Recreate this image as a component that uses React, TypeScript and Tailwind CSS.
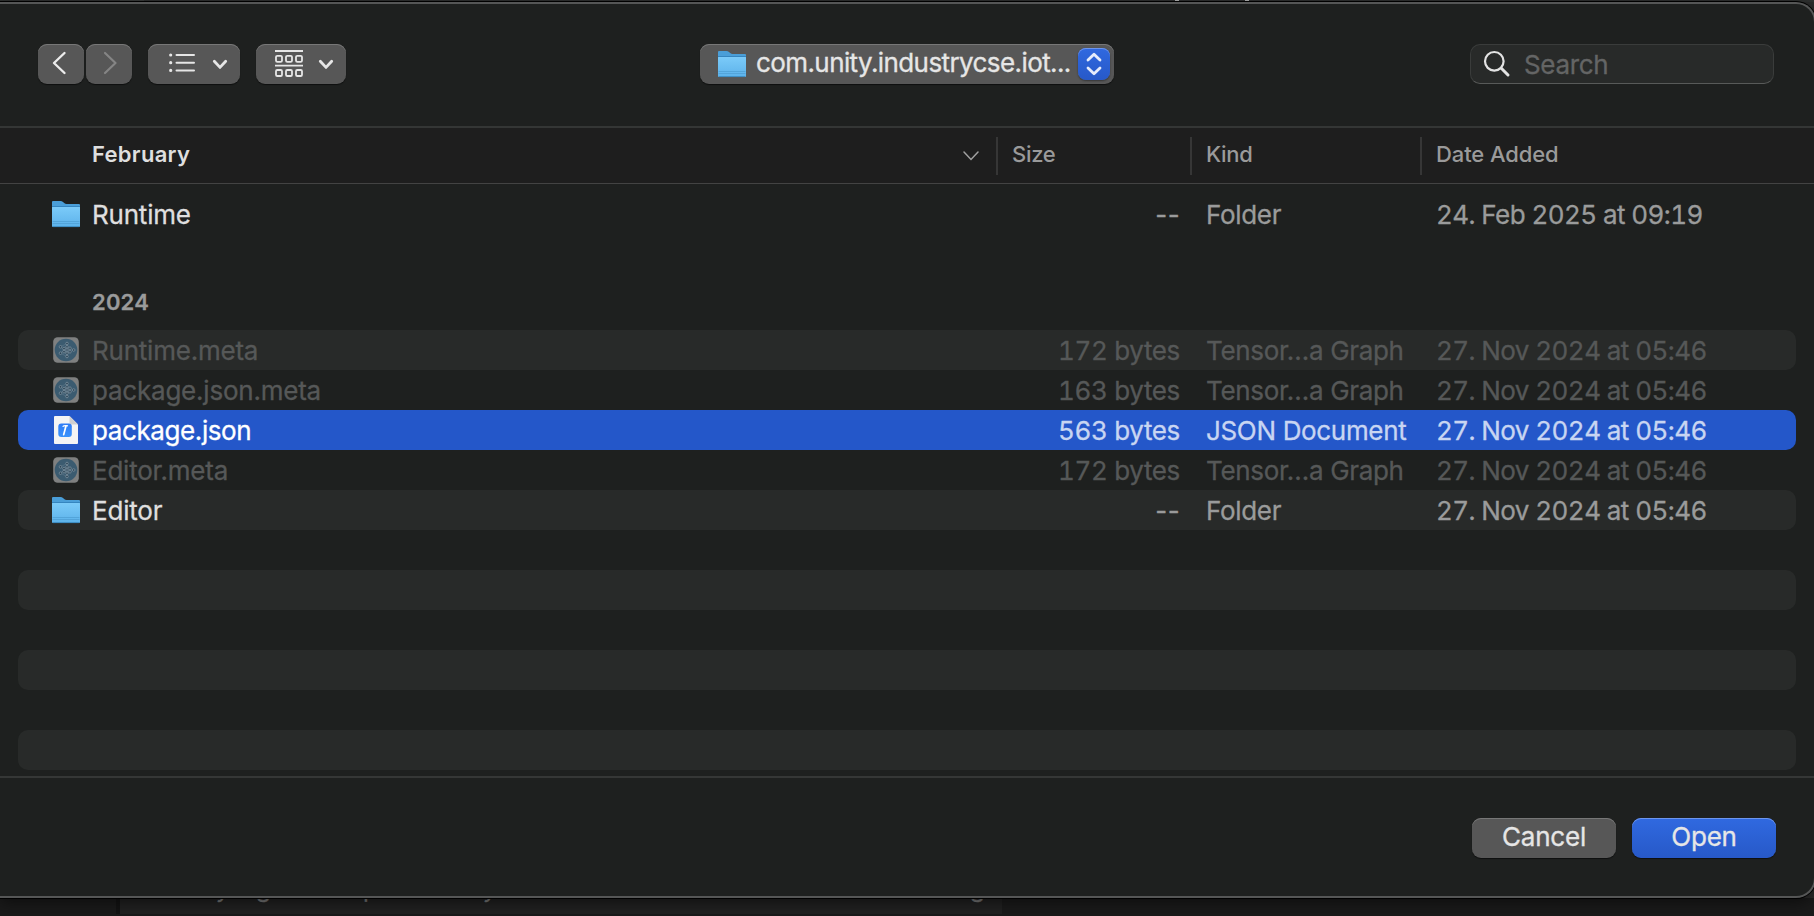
import React from "react";

function FolderIcon() {
  return (
    <svg width="30" height="28" viewBox="0 0 30 28">
      <defs>
        <linearGradient id="folderFront" x1="0" y1="0" x2="0" y2="1">
          <stop offset="0" stopColor="#7ccbf9" />
          <stop offset="1" stopColor="#5cb2ea" />
        </linearGradient>
      </defs>
      <path d="M1 2Q1 1 2 1H9.5Q11 1 12 2L13.5 3.2Q14.2 4 15.5 4H28Q29 4 29 5V10H1Z" fill="#4a9ed8" />
      <path d="M1 7.5Q1 6.6 2 6.6H28Q29 6.6 29 7.5V26Q29 27 28 27H2Q1 27 1 26Z" fill="url(#folderFront)" />
      <path d="M1 6.5H29" stroke="#3585bf" strokeWidth="1" />
      <path d="M1.5 21.5H28.5M1.5 23.5H28.5" stroke="#4f9fd4" strokeWidth=".8" />
      <path d="M2 26.6H28" stroke="#3d8cc2" strokeWidth="1" />
    </svg>
  );
}

const nodes = [
  [16, 8.5], [9.5, 11.8], [13, 13.5], [9.5, 18.2], [13, 16.7], [16, 11.8], [16, 15], [16, 18.2], [19, 13.2], [19, 16.8], [16, 21.5], [22.7, 15],
];

function GraphIcon() {
  return (
    <svg width="30" height="30" viewBox="0 0 30 30">
      <rect x="2.2" y="2.2" width="25.6" height="25.6" rx="4.5" fill="#7f8080" />
      <circle cx="15" cy="15" r="11.3" fill="#3b5b70" />
      <path d="M9.5 11.8L16 8.5M9.5 18.2L16 21.5M9.5 11.8L16 18.2M9.5 18.2L16 11.8M16 8.5V21.5M16 11.8L22.7 15L16 18.2" stroke="#61798a" strokeWidth=".6" fill="none" />
      {nodes.map(([x, y]) => (
        <circle key={`${x}-${y}`} cx={x} cy={y} r="1.3" fill="#2c4354" stroke="#7b8f9d" strokeWidth=".8" />
      ))}
    </svg>
  );
}

function JsonIcon() {
  return (
    <svg width="30" height="32" viewBox="0 0 30 32">
      <defs>
        <linearGradient id="jsonBadge" x1="0" y1="0" x2="0" y2="1">
          <stop offset="0" stopColor="#2f7cf6" />
          <stop offset="1" stopColor="#3a93fb" />
        </linearGradient>
      </defs>
      <path d="M3 3Q3 2 4 2H18.5L27 10.5V29Q27 30 26 30H4Q3 30 3 29Z" fill="#f4f4f4" />
      <path d="M18.5 2L27 10.5H20Q18.5 10.5 18.5 9Z" fill="#cfcfd1" />
      <rect x="7.3" y="9.5" width="13.5" height="13.5" rx="3" fill="url(#jsonBadge)" />
      <path d="M15 11.8L12.7 20.6" stroke="#fff" strokeWidth="1.7" strokeLinecap="round" />
      <path d="M11.6 12.6Q13.2 11 17 11.9" stroke="#fff" strokeWidth="1.3" fill="none" />
    </svg>
  );
}

function SmallChevron() {
  return (
    <svg width="16" height="12" viewBox="0 0 16 12" fill="none" stroke="#e6e6e6" strokeWidth="2.8" strokeLinecap="round" strokeLinejoin="round">
      <path d="M2.3 3.2L8 9.4L13.7 3.2" />
    </svg>
  );
}

type Kind = "folder" | "graph" | "json";
type Row = { name: string; size: string; kind: string; date: string; icon: Kind };

const rows: Row[] = [
  { name: "Runtime.meta", size: "172 bytes", kind: "Tensor…a Graph", date: "27. Nov 2024 at 05:46", icon: "graph" },
  { name: "package.json.meta", size: "163 bytes", kind: "Tensor…a Graph", date: "27. Nov 2024 at 05:46", icon: "graph" },
  { name: "package.json", size: "563 bytes", kind: "JSON Document", date: "27. Nov 2024 at 05:46", icon: "json" },
  { name: "Editor.meta", size: "172 bytes", kind: "Tensor…a Graph", date: "27. Nov 2024 at 05:46", icon: "graph" },
  { name: "Editor", size: "--", kind: "Folder", date: "27. Nov 2024 at 05:46", icon: "folder" },
];

function FileRow({ row, striped }: { row: Row; striped: boolean }) {
  const tone =
    row.icon === "json" ? "bg-[#2457c9] text-[#c8d5f2]" : row.icon === "graph" ? "text-[#565858]" : "text-[#9a9b9b]";
  const nameTone =
    row.icon === "json"
      ? "tracking-[-0.4px] text-white"
      : row.icon === "graph"
        ? "tracking-[-0.22px]"
        : "tracking-[-0.2px] text-[#dfdfdf]";
  const sizeStyle = row.size === "--" ? "tracking-[0.4px]" : "tracking-[-0.35px] tabular-nums";
  return (
    <div className={`mx-[18px] flex h-10 items-center rounded-[10px] text-[26px] whitespace-nowrap ${striped ? "bg-[#282a29]" : ""} ${tone}`}>
      <div className="flex w-[74px] shrink-0 justify-end pr-[11px]">
        {row.icon === "folder" ? <FolderIcon /> : row.icon === "graph" ? <GraphIcon /> : <JsonIcon />}
      </div>
      <div className={`w-[926px] shrink-0 ${nameTone}`}>{row.name}</div>
      <div className={`w-[162px] shrink-0 text-right ${sizeStyle}`}>{row.size}</div>
      <div className="ml-[26px] w-[230px] shrink-0 tracking-[-0.33px]">{row.kind}</div>
      <div className="tracking-[-0.58px] tabular-nums">{row.date}</div>
    </div>
  );
}

const button = "flex h-10 items-center rounded-[9px] bg-[#575757] shadow-[inset_0_1px_0_#777,0_1px_1px_#0008]";

export default function App() {
  return (
    <div className="flex h-[916px] w-[1814px] flex-col overflow-hidden bg-[#2b2b2b] font-[Inter,sans-serif] tracking-[-0.4px] [-webkit-text-stroke:0.3px]">
      <div className="flex h-[2px] shrink-0 bg-[#2f3130]">
        <div className="ml-[120px] h-[2px] w-6 bg-[#3a3c3b]" />
        <div className="ml-[1031px] h-px w-1 bg-[#b5b5b5]" />
        <div className="ml-[66px] h-px w-1 bg-[#b5b5b5]" />
      </div>
      <main className="z-10 flex h-[896px] w-[1816px] shrink-0 flex-col rounded-r-[20px] border-y-2 border-r-2 border-[#555656] bg-[#1e201f] shadow-[0_0_0_1px_#000,0_4px_16px_#0008]">
        <header className="flex h-[122px] shrink-0 items-start pt-10 pl-[38px]">
          <button className={`${button} w-[46px] justify-center`}>
            <svg width="20" height="28" viewBox="0 0 20 28" fill="none" stroke="#ececec" strokeWidth="2.4" strokeLinecap="round" strokeLinejoin="round">
              <path d="M13.5 3L3 13L13.5 23" />
            </svg>
          </button>
          <button className={`${button} ml-[2px] w-[46px] justify-center`}>
            <svg width="20" height="28" viewBox="0 0 20 28" fill="none" stroke="#858585" strokeWidth="2.2" strokeLinecap="round" strokeLinejoin="round">
              <path d="M6 3L16.5 13L6 23" />
            </svg>
          </button>
          <button className={`${button} ml-4 w-[92px] pl-5`}>
            <svg width="28" height="24" viewBox="0 0 28 24" stroke="#e6e6e6" strokeWidth="2" strokeLinecap="round">
              <path d="M8.5 3H26M8.5 10.7H26M8.5 18.4H26" />
              <path d="M2.7 3h.01M2.7 10.7h.01M2.7 18.4h.01" strokeWidth="3.2" />
            </svg>
            <span className="ml-4"><SmallChevron /></span>
          </button>
          <button className={`${button} ml-4 w-[90px] pl-[18px]`}>
            <svg width="30" height="30" viewBox="0 0 30 30" fill="none" stroke="#e6e6e6" strokeWidth="1.8">
              <path d="M1 2H29M1 16.7H29" />
              <rect x="2" y="6.8" width="6" height="6" rx="1.3" /><rect x="12" y="6.8" width="6" height="6" rx="1.3" /><rect x="22" y="6.8" width="6" height="6" rx="1.3" />
              <rect x="2" y="21" width="6" height="6" rx="1.3" /><rect x="12" y="21" width="6" height="6" rx="1.3" /><rect x="22" y="21" width="6" height="6" rx="1.3" />
            </svg>
            <span className="ml-[14px]"><SmallChevron /></span>
          </button>
          <button className={`${button} ml-[354px] w-[414px] pl-[17px] text-[26px] whitespace-nowrap text-[#e6e6e6]`}>
            <FolderIcon />
            <span className="ml-[9px] w-[316px] pb-[3px] text-left tracking-[-0.59px]">com.unity.industrycse.iot...</span>
            <span className="ml-[6px] flex size-8 items-center justify-center rounded-[8px] bg-linear-to-b from-[#3069e0] to-[#2759c8] shadow-[inset_0_1px_0_#6d95ee,0_1px_2px_#0006]">
              <svg width="18" height="26" viewBox="0 0 18 26" fill="none" stroke="#e6ecfb" strokeWidth="2.8" strokeLinecap="round" strokeLinejoin="round">
                <path d="M3 9L9 3.2L15 9M3 17L9 22.8L15 17" />
              </svg>
            </span>
          </button>
          <div className="ml-[356px] flex h-10 w-[304px] items-center rounded-[10px] border border-[#3a3c3b] border-b-[#585a59] bg-[#282a29] pl-3 text-[26px] text-[#646565]">
            <svg width="28" height="28" viewBox="0 0 28 28" fill="none" stroke="#e3e3e3" strokeLinecap="round">
              <circle cx="11.3" cy="11.3" r="9.3" strokeWidth="2.2" />
              <path d="M18.3 18.3L25 25" strokeWidth="3" />
            </svg>
            <span className="ml-[13px] tracking-[-0.35px]">Search</span>
          </div>
        </header>

        <div className="flex h-[58px] shrink-0 items-center border-t-2 border-b border-t-[#343635] border-b-[#434343] bg-[#1e1e1e] text-[22px] font-medium text-[#9a9a9a] [-webkit-text-stroke:0]">
          <div className="w-[871px] pb-[2px] pl-[92px] font-semibold tracking-[0.3px] text-[#dfdfdf]">February</div>
          <div className="flex h-[38px] w-[125px] items-center">
            <svg width="16" height="10" viewBox="0 0 16 10" fill="none" stroke="#a0a0a0" strokeWidth="1.5" className="ml-[92px]" strokeLinecap="round">
              <path d="M1 1L8 8.5L15 1" />
            </svg>
          </div>
          <div className="flex h-[38px] w-[194px] items-center border-l-2 border-[#363636] pb-[2px] pl-[14px] tracking-[-0.3px]">Size</div>
          <div className="flex h-[38px] w-[230px] items-center border-l-2 border-[#363636] pb-[2px] pl-[14px] tracking-[-0.3px]">Kind</div>
          <div className="flex h-[38px] items-center border-l-2 border-[#363636] pb-[2px] pl-[14px] tracking-[-0.1px]">Date Added</div>
        </div>

        <div className="h-[592px] shrink-0 overflow-hidden pt-[10px]">
          <FileRow row={{ name: "Runtime", size: "--", kind: "Folder", date: "24. Feb 2025 at 09:19", icon: "folder" }} striped={false} />
          <div className="flex h-[96px] items-end pb-[11px] pl-[92px] text-[22px] font-semibold tracking-[0.2px] text-[#9a9b9b]">2024</div>
          {rows.map((row, i) => (
            <FileRow key={row.name} row={row} striped={i % 2 === 0 && row.icon !== "json"} />
          ))}
          {[0, 1, 2].map((i) => (
            <div key={i} className="mx-[18px] mt-10 h-10 rounded-[10px] bg-[#282a29]" />
          ))}
        </div>

        <footer className="flex grow items-start justify-end gap-4 border-t-2 border-[#353736] pt-10 pr-[38px] text-[26px] text-[#e6e6e6]">
          <button className={`${button} w-36 justify-center pb-[3px] tracking-[-0.2px]`}>Cancel</button>
          <button className="flex h-10 w-36 items-center justify-center rounded-[9px] bg-linear-to-b from-[#3069e0] to-[#2759c8] pb-[3px] tracking-[-0.2px] shadow-[inset_0_1px_0_#6d95ee,0_1px_1px_#0008]">Open</button>
        </footer>
      </main>
      <div className="flex grow bg-[#1a1a1a]">
        <div className="h-4 w-[120px] border-r-4 border-[#131313]" />
        <div className="h-4 w-[882px] overflow-hidden bg-[#212121]">
          <div className="-mt-[21px] flex pl-[96px] text-[24px] leading-6 text-[#777]">
            <span className="w-10">y</span>
            <span className="w-[107px]">g</span>
            <span className="w-[120px]">p</span>
            <span className="w-[487px]">y</span>
            <span>g</span>
          </div>
        </div>
      </div>
    </div>
  );
}
